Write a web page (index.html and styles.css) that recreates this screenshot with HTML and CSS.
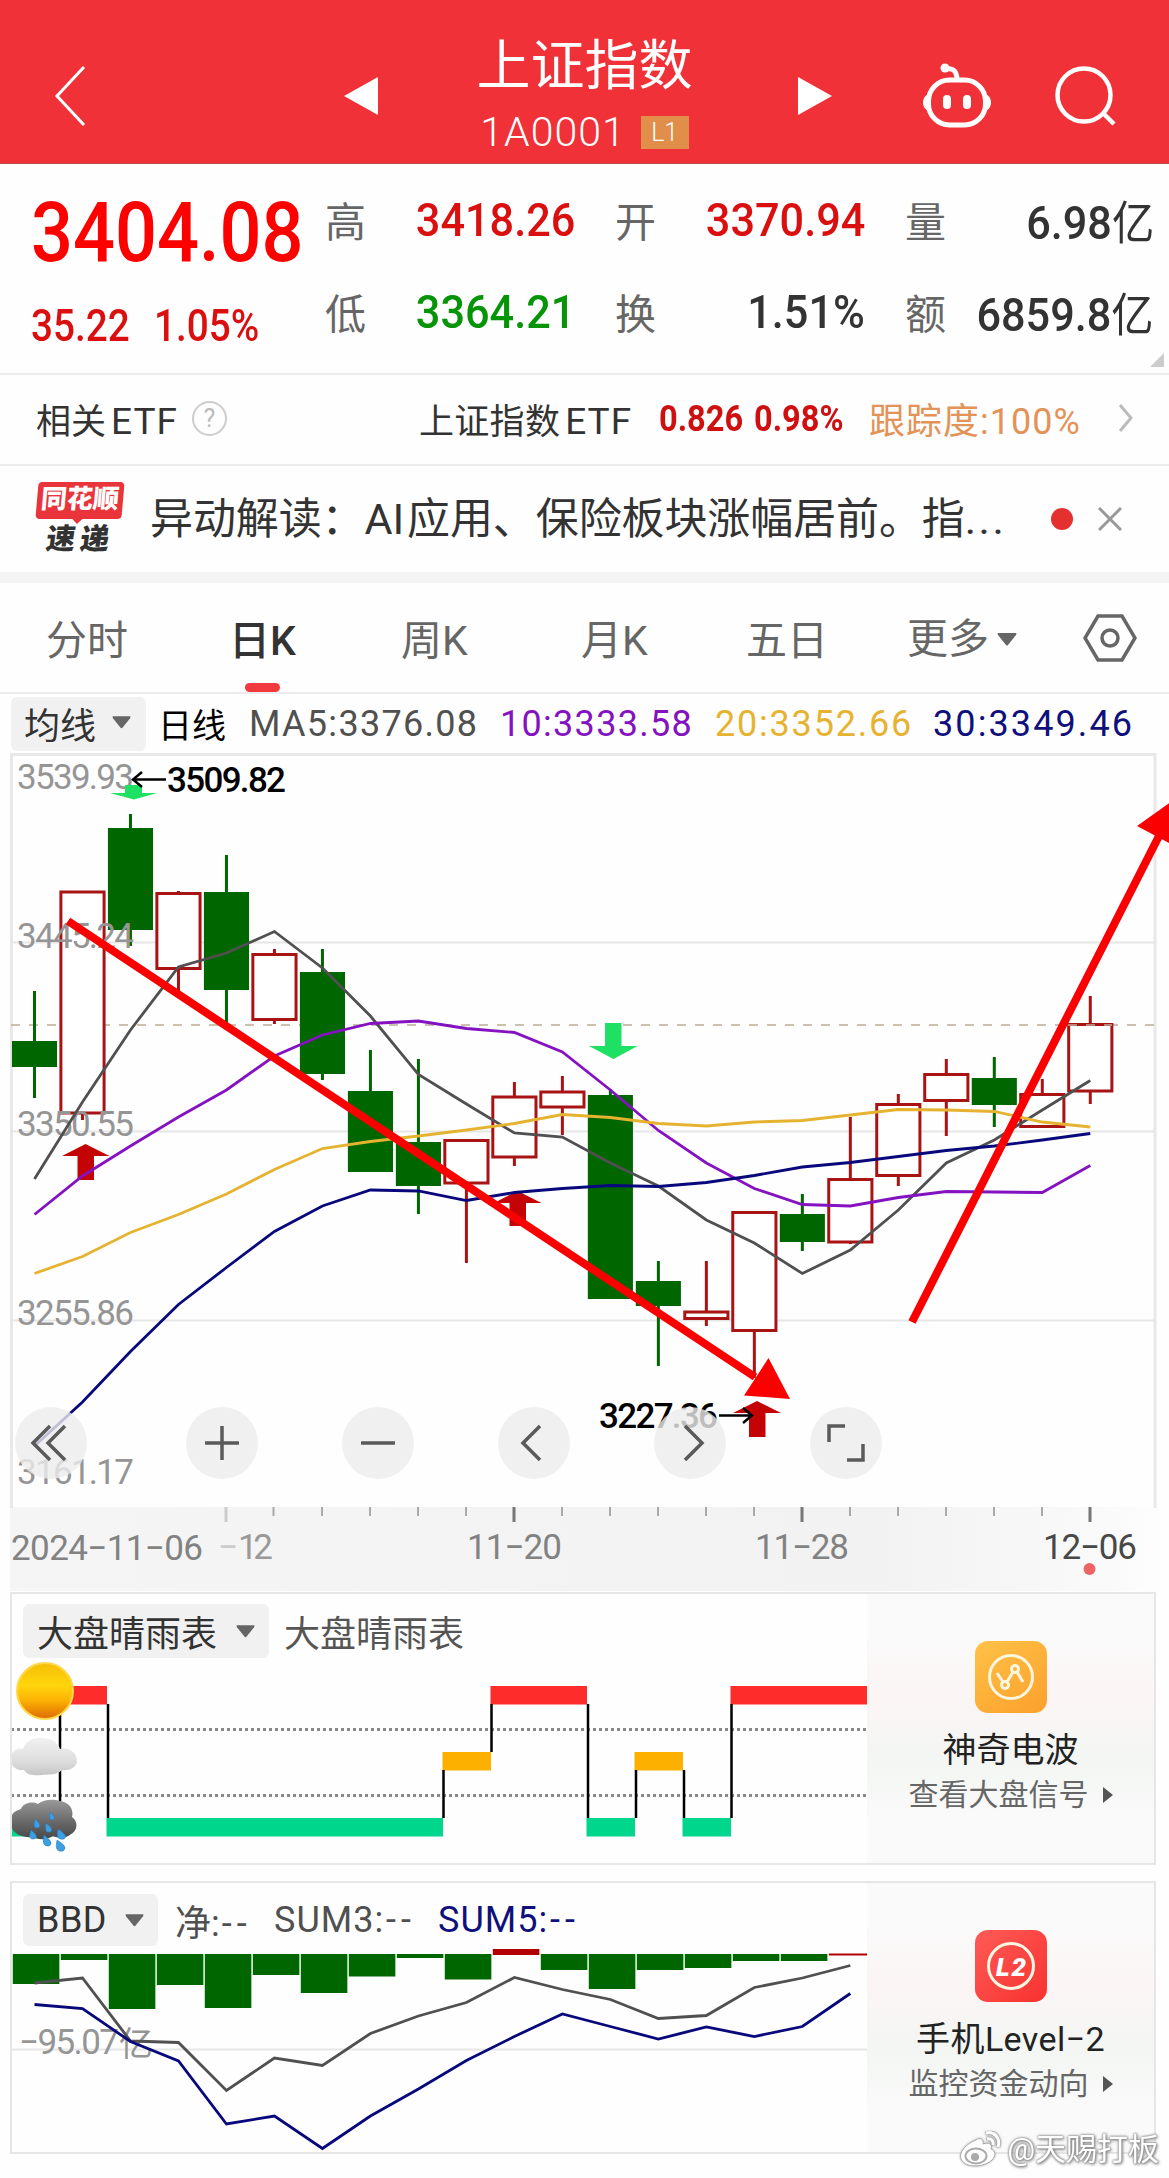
FILE: index.html
```html
<!DOCTYPE html>
<html lang="zh-CN">
<head>
<meta charset="utf-8">
<title>上证指数 1A0001</title>
<link rel="stylesheet" href="styles.css">
</head>
<body>
<div class="app">
  <header class="topbar">
    <svg class="ic-back" width="34" height="62" viewBox="0 0 34 62"><path d="M31 2L4 31L31 60"/></svg>
    <svg class="ic-prev" width="35" height="38" viewBox="0 0 35 38"><path d="M0 19L34 0V38Z"/></svg>
    <div class="title">
      <h1>上证指数</h1>
      <p><span>1A0001</span><em>L1</em></p>
    </div>
    <svg class="ic-next" width="35" height="38" viewBox="0 0 35 38"><path d="M35 19L1 0V38Z"/></svg>
    <svg class="ic-bot" width="70" height="66" viewBox="0 0 70 66">
      <rect x="6.500" y="17" width="57" height="45" rx="21"/>
      <path d="M35 17C35 8 31 5 25 6"/>
      <circle class="solid" cx="23" cy="5" r="4.500"/>
      <path class="solid" d="M7 31C-1 33-1 46 7 48ZM63 31C71 33 71 46 63 48Z"/>
      <rect class="solid" x="21" y="32" width="8" height="14" rx="4"/>
      <rect class="solid" x="41" y="32" width="8" height="14" rx="4"/>
    </svg>
    <svg class="ic-search" width="62" height="62" viewBox="0 0 62 62"><circle cx="29" cy="30" r="26.500"/><path d="M48 48L59 59"/></svg>
  </header>

  <section class="quote">
    <div class="last">
      <b class="price">3404.08</b>
      <div class="chg"><b>35.22</b><b>1.05%</b></div>
    </div>
    <dl class="stats">
      <dt>高</dt><dd class="up">3418.26</dd><dt>开</dt><dd class="up">3370.94</dd><dt>量</dt><dd>6.98<i>亿</i></dd>
      <dt>低</dt><dd class="down">3364.21</dd><dt>换</dt><dd>1.51%</dd><dt>额</dt><dd>6859.8<i>亿</i></dd>
    </dl>
    <span class="corner"></span>
  </section>

  <section class="etf">
    <span class="etf-label">相关<span class="latin">ETF</span></span>
    <span class="help">?</span>
    <span class="etf-name">上证指数<span class="latin">ETF</span></span>
    <b class="etf-price">0.826</b>
    <b class="etf-pct">0.98%</b>
    <span class="track">跟踪度:100%</span>
    <svg width="16" height="30" viewBox="0 0 16 30"><path d="M2 2L13 15L2 28"/></svg>
  </section>

  <section class="news">
    <div class="brand"><strong>同花顺</strong><b>速递</b></div>
    <p>异动解读：<span>AI</span>应用、保险板块涨幅居前。指<span class="more-dots">...</span></p>
    <i class="dot"></i>
    <svg width="24" height="24" viewBox="0 0 24 24"><path d="M1 1L23 23M23 1L1 23"/></svg>
  </section>

  <nav class="tabs">
    <a>分时</a><a class="active">日K</a><a>周K</a><a>月K</a><a>五日</a>
    <a class="more">更多<svg width="20" height="13" viewBox="0 0 20 13"><path d="M1 0H19Q20 0 19 2L11 12Q10 13 9 12L1 2Q0 0 1 0Z"/></svg></a>
    <svg class="gear" width="54" height="48" viewBox="0 0 54 48"><path d="M15 2H39L52 24L39 46H15L2 24Z"/><circle cx="27" cy="24" r="8"/></svg>
  </nav>

  <div class="ma">
    <span class="chip">均线<svg width="19" height="13" viewBox="0 0 20 13"><path d="M1 0H19Q20 0 19 2L11 12Q10 13 9 12L1 2Q0 0 1 0Z"/></svg></span>
    <span class="ma-kind">日线</span>
    <span class="ma5">MA5:3376.08</span>
    <span class="ma10">10:3333.58</span>
    <span class="ma20">20:3352.66</span>
    <span class="ma30">30:3349.46</span>
  </div>

  <div class="kline">
    <svg class="plot" width="1169" height="756" viewBox="0 752 1169 756">
      <path class="frame" d="M11.500 1508V754.500H1155V1508"/>
      <path class="grid" d="M11 942.500H1155M11 1131.500H1155M11 1320.500H1155"/>
      <path class="now" d="M11 1025H1155"/>
      <g transform="translate(34.500 0) scale(47.990 1)">
        <path class="wick dn" d="M0 991V1098M2 814V946M4 855V1023M6 949V1080M7 1050V1100M8 1059V1214M12 1089V1100M13 1261V1366M16 1194V1251M20 1057V1127"/>
        <path class="body dn" d="M-.47 1041h.94v26h-.94zM1.530 828h.94v102h-.94zM3.530 892h.94v98h-.94zM5.530 972h.94v102h-.94zM6.530 1091h.94v81h-.94zM7.530 1142h.94v44h-.94zM11.530 1095h.94v204h-.94zM12.530 1281h.94v25h-.94zM15.530 1214h.94v28h-.94zM19.530 1078h.94v27h-.94z"/>
        <path class="wick up" d="M1 1112V1120M3 891V991M5 949V1024M9 1183V1263M10 1082V1166M11 1076V1135M14 1261V1326M15 1330V1378M17 1117V1244M18 1094V1186M19 1059V1136M21 1079V1094M22 996V1104"/>
        <path class="body up" d="M.55 892h.9v221h-.9zM2.550 893.500h.9v75h-.9zM4.550 954.500h.9v65h-.9zM8.550 1140.500h.9v42.500h-.9zM9.550 1097h.9v60h-.9zM10.550 1092h.9v15h-.9zM13.550 1312h.9v6.500h-.9zM14.550 1212.500h.9v118h-.9zM16.550 1179.500h.9v62.500h-.9zM17.550 1104.500h.9v71h-.9zM18.550 1074.500h.9v26h-.9zM20.550 1094.500h.9v32h-.9zM21.550 1024.500h.9v66.500h-.9z"/>
      </g>
      <path class="now" d="M1068 1025H1112"/>
      <g class="axis">
        <text x="17" y="789" textLength="117">3539.93</text>
        <text x="17" y="947.500" textLength="117">3445.24</text>
        <text x="17" y="1136" textLength="117">3350.55</text>
        <text x="17" y="1324.500" textLength="117">3255.86</text>
        <text x="17" y="1483.500" textLength="117">3161.17</text>
      </g>
      <path class="sell" d="M125 785H142V793H157L134 799.500L110 793H125ZM605 1023H621.500V1046H637.500L613.500 1059L589 1046H605Z"/>
      <path class="buy" d="M85.500 1144L109.500 1156H94V1180H77.500V1156H62ZM517.500 1191L541.500 1203H526V1226H509.500V1203H494ZM757 1401L781 1413H765.500V1437H749V1413H733Z"/>
      <g class="lines" transform="translate(34.500 0) scale(47.990 1)">
        <polyline stroke="#505050" points="0,1179 1,1102 2,1030 3,967 4,953 5,931.500 6,968 7,1016 8,1074.500 9,1104 10,1133 11,1137 12,1163 13,1186 14,1220 15,1243 16,1273.500 17,1250 18,1210 19,1163 20,1140 21,1110 22,1080.500"/>
        <polyline stroke="#8412c0" points="0,1214.500 1,1176 2,1146 3,1117 4,1090 5,1056 6,1035 7,1023.500 8,1021 9,1028.500 10,1032.500 11,1052 12,1090 13,1130.500 14,1163 15,1188.500 16,1204.500 17,1206 18,1197.500 19,1191.500 20,1192 21,1192.500 22,1165.500"/>
        <polyline stroke="#e6b330" points="0,1273.500 1,1256.500 2,1232.500 3,1214.500 4,1194 5,1169.500 6,1148.500 7,1141.500 8,1136 9,1130 10,1123.500 11,1114.500 12,1117.500 13,1123.500 14,1126 15,1122 16,1120.500 17,1115 18,1109.500 19,1110 20,1111.500 21,1122 22,1127"/>
        <polyline stroke="#08087c" points="0,1446 1,1402 2,1351.500 3,1304.500 4,1267.500 5,1231.500 6,1206 7,1190 8,1191 9,1200.500 10,1192.500 11,1188.500 12,1185.500 13,1186.500 14,1182.500 15,1175.500 16,1167 17,1162.500 18,1156.500 19,1150.500 20,1146 21,1140 22,1133.500"/>
      </g>
      <g class="extreme">
        <text x="167" y="792" textLength="119">3509.82</text>
        <text x="599" y="1428" textLength="119">3227.36</text>
        <path d="M166 779.500H133M142 772L133 779.500L142 787M719 1415.500H752M743 1408L752 1415.500L743 1423"/>
      </g>
      <path class="trend" d="M68 921L755 1377M912 1322L1159 836"/>
      <path class="head" d="M768.500 1358L790 1399L744 1395.500ZM1137 826L1182 794L1180 849Z"/>
    </svg>
    <div class="tools">
      <button><svg viewBox="0 0 72 72"><path d="M35 19L18 36L35 53M50 19L33 36L50 53"/></svg></button>
      <button><svg viewBox="0 0 72 72"><path d="M19 36H53M36 19V53"/></svg></button>
      <button><svg viewBox="0 0 72 72"><path d="M19 36H53"/></svg></button>
      <button><svg viewBox="0 0 72 72"><path d="M42 19L25 36L42 53"/></svg></button>
      <button><svg viewBox="0 0 72 72"><path d="M31 19L48 36L31 53"/></svg></button>
      <button><svg viewBox="0 0 72 72"><path d="M19 35V19H35M53 37V53H37"/></svg></button>
    </div>
  </div>

  <div class="dates">
    <svg width="1169" height="84" viewBox="0 1507 1169 84">
      <path class="minor" d="M273.500 1507v9M322 1507v9M370 1507v9M418 1507v9M466 1507v9M562 1507v9M610 1507v9M658 1507v9M706 1507v9M754 1507v9M850 1507v9M898 1507v9M946 1507v9M994 1507v9M1042 1507v9"/>
      <path class="first" d="M226 1507v15"/>
      <path class="major" d="M514 1507v15M802 1507v15M1090 1507v15"/>
      <text class="d" x="11" y="1559.500" textLength="192">2024−11−06</text>
      <text class="fade" x="218" y="1559" textLength="15">−</text>
      <text class="fade2" x="238" y="1559" textLength="35">12</text>
      <text class="d" x="467" y="1559" textLength="95">11−20</text>
      <text class="d" x="755" y="1559" textLength="94">11−28</text>
      <text class="today" x="1043" y="1559" textLength="94">12−06</text>
      <circle cx="1089.500" cy="1569" r="6" fill="#ed6464"/>
    </svg>
  </div>

  <section class="panel">
    <div class="chart">
      <svg class="plot" width="856" height="270" viewBox="12 1594 856 270">
        <path class="dots" d="M11 1729.500H867M11 1795.500H867"/>
        <path fill="#ff2c2c" d="M59 1686h48v18.500h-48zM490.500 1686h96.500v18.500h-96.500zM730.500 1686H868v18.500H730.500z"/>
        <path fill="#fdb000" d="M442.500 1752h48.500v18.500h-48.500zM634.500 1752h48.500v18.500h-48.500z"/>
        <path fill="#00d68c" d="M11 1818h48v18.500h-48zM106.500 1818h336.500v18.500h-336.500zM586.500 1818h48.500v18.500h-48.500zM682.500 1818h48.500v18.500h-48.500z"/>
        <path class="step" d="M60 1704V1818M108 1704V1818M443.500 1770V1818M491.500 1704V1752M588 1704V1818M636 1770V1818M684 1770V1818M731.500 1704V1818"/>
        <defs>
          <linearGradient id="sun" x2="0" y2="1"><stop offset="0" stop-color="#f5be05"/><stop offset=".4" stop-color="#ffd60c"/><stop offset=".65" stop-color="#fdb505"/><stop offset="1" stop-color="#dc6a00"/></linearGradient>
          <linearGradient id="cloud" x2="0" y2="1"><stop offset="0" stop-color="#f1f1f1"/><stop offset=".6" stop-color="#dedede"/><stop offset="1" stop-color="#c6c6c6"/></linearGradient>
          <linearGradient id="storm" x2="0" y2="1"><stop offset="0" stop-color="#999"/><stop offset=".6" stop-color="#666"/><stop offset="1" stop-color="#484848"/></linearGradient>
        </defs>
        <circle cx="45" cy="1691" r="28" fill="url(#sun)" stroke="#ffd84a" stroke-width="2"/>
        <path fill="url(#cloud)" d="M11 1760C10 1751 17 1748 23 1749C26 1741 33 1737 43 1738C52 1738 58 1743 60 1749C70 1747 77 1753 77 1762C76 1768 68 1771 62 1770C56 1776 47 1774 42 1775C34 1776 27 1775 24 1770C17 1771 11 1767 11 1760Z"/>
        <path fill="url(#storm)" d="M11 1825C9 1815 14 1811 21 1809C23 1803 32 1801 38 1804C44 1799 53 1799 60 1801C69 1802 74 1809 72 1817C79 1822 77 1831 71 1834C66 1839 58 1838 53 1836C47 1840 38 1840 32 1837C22 1838 12 1833 11 1825Z"/>
        <path fill="#3b9fe2" stroke="#2476b4" stroke-width=".5" d="M50 1812q-2 9 3 8q4-2-3-8zM35 1819q-3 10 3 9q5-2-3-9zM46 1823q-2 11 4 9q5-2-4-9zM31 1830q-4 10 3 9q6-2-3-9zM44 1835q-3 12 5 11q6-3-5-11zM58 1829q-3 12 6 10q5-3-6-10zM57 1840q-3 13 6 11q6-4-6-11z"/>
      </svg>
      <div class="legend">
        <span class="chip">大盘晴雨表<svg width="19" height="13" viewBox="0 0 20 13"><path d="M1 0H19Q20 0 19 2L11 12Q10 13 9 12L1 2Q0 0 1 0Z"/></svg></span>
        <span class="name">大盘晴雨表</span>
      </div>
    </div>
    <aside class="promo">
      <svg class="badge wave" viewBox="0 0 72 72"><circle cx="36" cy="36" r="21.500"/><path d="M22 32L28 41M32 41L38 31M42 31L48 41"/><circle cx="30" cy="44" r="3.500"/><circle cx="40" cy="28" r="3.500"/></svg>
      <h3>神奇电波</h3>
      <p>查看大盘信号<i></i></p>
    </aside>
  </section>

  <section class="panel bbd">
    <div class="chart">
      <svg class="plot" width="856" height="270" viewBox="12 1883 856 270">
        <path class="grid" d="M11 2049.500H868"/>
        <g transform="translate(12.800 0) scale(48 1)">
          <path fill="#006600" d="M0 1954h.97v30h-.97zM1 1954h.97v6h-.97zM2 1954h.97v55h-.97zM3 1954h.97v31h-.97zM4 1954h.97v54h-.97zM5 1954h.97v21h-.97zM6 1954h.97v39h-.97zM7 1954h.97v22.500h-.97zM8 1954h.97v4h-.97zM9 1954h.97v25.500h-.97zM11 1954h.97v16h-.97zM12 1954h.97v35h-.97zM13 1954h.97v16h-.97zM14 1954h.97v14h-.97zM15 1954h.97v7h-.97zM16 1954h.97v7h-.97z"/>
          <path fill="#b20000" d="M10 1949h.97v6h-.97zM17 1953.500h1v2h-1z"/>
        </g>
        <text class="scale" x="19" y="2054" textLength="100">−95.07</text>
        <text class="scale cn" x="119" y="2056">亿</text>
        <g class="lines" transform="translate(34.500 0) scale(47.990 1)">
          <polyline stroke="#505050" points="0,1983 1,1978 2,2041 3,2042.500 4,2090.500 5,2058 6,2065.500 7,2033.500 8,2016 9,2002.500 10,1977.500 11,1989.500 12,1999.500 13,2018.500 14,2015.500 15,1987.500 16,1978 17,1965.500"/>
          <polyline stroke="#08087c" points="0,2004.500 1,2008.500 2,2041.500 3,2061 4,2124 5,2116 6,2148.500 7,2116 8,2089 9,2060.500 10,2036.500 11,2014 12,2026.500 13,2039 14,2027 15,2036.500 16,2026.500 17,1993.500"/>
        </g>
      </svg>
      <div class="legend">
        <span class="chip">BBD<svg width="19" height="13" viewBox="0 0 20 13"><path d="M1 0H19Q20 0 19 2L11 12Q10 13 9 12L1 2Q0 0 1 0Z"/></svg></span>
        <span class="net">净:<i>--</i></span>
        <span class="sum3">SUM3:<i>--</i></span>
        <span class="sum5">SUM5:<i>--</i></span>
      </div>
    </div>
    <aside class="promo">
      <svg class="badge level" viewBox="0 0 72 72"><circle cx="36" cy="36" r="22.500"/><text x="21" y="46" textLength="30">L2</text></svg>
      <h3>手机Level−2</h3>
      <p>监控资金动向<i></i></p>
    </aside>
    <div class="mark">
      <svg width="44" height="38" viewBox="0 0 44 38">
        <path class="w" d="M17 9C21 6 25 8 24 13C30 11 34 13 32 18C37 20 37 25 33 29C26 36 10 37 4 31C-3 24 6 13 17 9Z"/>
        <ellipse class="e" cx="17" cy="25" rx="10.500" ry="7.500"/>
        <circle class="p" cx="16" cy="26" r="4"/>
        <path class="r" d="M27 2C35 0 42 7 39 16M28 8C32 7 35 10 34 14"/>
      </svg>
      <span>@天赐打板</span>
    </div>
  </section>
</div>
</body>
</html>
```
FILE: styles.css
```css
* { box-sizing: border-box; margin: 0; padding: 0; }
body {
  width: 1169px;
  height: 2178px;
  background: #fefefe;
  color: #333;
  font-family: Roboto, "Noto Sans CJK SC", sans-serif;
  overflow: hidden;
}
svg { display: block; flex: none; }
em, i { font-style: normal; }
.app { display: flex; flex-direction: column; width: 1169px; height: 2178px; position: relative; overflow: hidden; }
.app > * { flex: none; }

/* Top bar */
.topbar { display: flex; align-items: center; height: 164px; padding: 29px 0 0 53px; background: #f03238; color: #fff; border-bottom: 1px solid #b8494c; }
.topbar svg { fill: none; stroke: #fff; }
.ic-back { stroke-width: 3; }
.topbar .ic-prev, .topbar .ic-next { fill: #fff; stroke: none; }
.ic-prev { margin-left: 257px; }
.title { width: 418px; height: 132px; padding: 3px 7px 0 0; text-align: center; }
.title h1 { font-size: 54px; font-weight: 400; line-height: 68px; }
.title p { display: flex; justify-content: center; align-items: center; height: 62px; }
.title span { font-size: 41px; font-weight: 300; letter-spacing: 1px; margin-right: 15px; }
.title em { width: 48px; height: 33px; line-height: 33px; font-size: 25px; font-weight: 300; background: #e18e4a; }
.ic-bot { margin-left: 90px; stroke-width: 5; }
.solid { fill: #fff; stroke: none; }
.ic-search { margin-left: 63px; stroke-width: 4.5; }

/* Quote */
.quote { display: flex; position: relative; height: 211px; border-bottom: 2px solid #ececec; }
.last { width: 325px; padding-left: 31px; }
.last b { display: block; transform-origin: 0 50%; font-weight: 500; }
.price { font-size: 84px; line-height: 100px; margin-top: 19px; color: #fd0000; transform: scaleX(.88); }
.chg { display: flex; height: 60px; margin-top: 13px; color: #da1010; }
.chg b { width: 123px; font-size: 44px; line-height: 60px; transform: scaleX(.88); }
.stats { display: grid; width: 830px; grid-template-columns: 40px 210px 81px 209px 80px 209px; grid-template-rows: 92px 92px; padding-top: 9px; align-items: center; }
.stats dt { font-size: 41px; color: #666; }
.stats dt:nth-of-type(3n+2), .stats dt:nth-of-type(3n) { padding-left: 40px; }
.stats dd { justify-self: end; font-size: 47px; font-weight: 500; white-space: nowrap; transform: scaleX(.92); transform-origin: 100% 50%; }
.stats dd i { font-size: 46px; font-weight: 400; }
.stats .up { color: #da1010; }
.stats .down { color: #089408; }
.corner { position: absolute; right: 5px; bottom: 6px; border: 7px solid transparent; border-right-color: #ccc; border-bottom-color: #ccc; }

/* Related ETF */
.etf { display: flex; align-items: center; height: 91px; padding: 0 0 3px 36px; border-bottom: 2px solid #ececec; font-size: 35px; white-space: nowrap; }
.latin { margin-left: 5px; font-size: 37px; letter-spacing: 1px; }
.etf-label { width: 156px; }
.help { width: 35px; height: 35px; line-height: 31px; border: 2px solid #ccc; border-radius: 50%; text-align: center; font-size: 25px; color: #bbb; }
.etf-name { width: 240px; margin-left: 192px; letter-spacing: .3px; }
.etf b { color: #cf1010; font-size: 37px; font-weight: 700; transform: scaleX(.88); transform-origin: 0 50%; }
.etf-price { width: 95px; }
.etf-pct { width: 115px; }
.track { width: 249px; color: #e39258; font-size: 36px; letter-spacing: 1px; }
.etf svg { fill: none; stroke: #bbb; stroke-width: 3; }

/* News strip */
.news { display: flex; align-items: center; height: 117px; padding: 0 0 0 37px; border-bottom: 11px solid #f4f4f4; }
.brand { width: 113px; height: 74px; text-align: center; }
.brand strong { display: block; position: relative; width: 86px; height: 37px; line-height: 35px; background: #e8343a; border-radius: 4px; color: #fff; font-size: 26px; font-weight: 900; transform: skewX(-5deg); }
.brand strong::after { content: ""; position: absolute; left: 36px; top: 36px; border: 6px solid transparent; border-top-color: #e8343a; border-bottom: 0; }
.brand b { display: block; width: 87px; line-height: 40px; font-size: 29px; font-weight: 900; letter-spacing: 5px; transform: skewX(-8deg); }
.news p { width: 901px; font-size: 43px; line-height: 60px; white-space: nowrap; letter-spacing: -.1px; }
.news p span { margin-right: 3px; }
.news p .more-dots { letter-spacing: 2.5px; }
.dot { width: 22px; height: 22px; border-radius: 50%; background: #e53030; }
.news svg { margin-left: 25px; fill: none; stroke: #999; stroke-width: 3; }

/* Period tabs */
.tabs { display: grid; grid-template-columns: 183px 172px 180px 165px 161px 176px 54px; align-items: center; height: 111px; padding-left: 46px; border-bottom: 2px solid #ececec; font-size: 41px; color: #666; }
.tabs a { position: relative; line-height: 109px; padding-top: 4px; height: 109px; overflow: hidden; }
.tabs .active { color: #333; font-weight: 500; }
.tabs .active::after { content: ""; position: absolute; left: 16px; bottom: 0; width: 35px; height: 9px; border-radius: 5px; background: #f03a40; }
.more { display: flex; align-items: center; gap: 8px; }
.more svg, .chip svg { fill: #666; }
.gear { fill: none; stroke: #666; stroke-width: 3.5; }

/* Moving average legend */
.ma { display: flex; align-items: center; height: 58px; padding: 1px 0 0 11px; font-size: 36px; white-space: nowrap; }
.chip { display: flex; align-items: center; justify-content: space-between; background: #f1f1f1; border-radius: 6px; color: #333; }
.ma .chip { width: 135px; height: 54px; padding: 0 15px 2px 13px; font-size: 36px; }
.ma-kind { width: 91px; margin-left: 12px; color: #000; font-size: 34px; }
.ma5 { width: 251px; color: #505050; letter-spacing: 1.3px; }
.ma10 { width: 215px; color: #8412c0; letter-spacing: 1.3px; }
.ma20 { width: 218px; color: #e6b330; letter-spacing: 1.8px; }
.ma30 { color: #10107c; letter-spacing: 2.1px; }

/* Candlestick chart */
.kline { position: relative; height: 755px; }
.kline .plot { height: 756px; }
.frame { fill: none; stroke: #e8e8e8; stroke-width: 3; }
.grid { stroke: #e6e6e6; stroke-width: 2; }
.now { stroke: #b9ad94; stroke-width: 1.5; stroke-dasharray: 9 9; }
.wick, .body.up { stroke-width: 3; vector-effect: non-scaling-stroke; }
.wick.dn { stroke: #006600; }
.wick.up { stroke: #a81414; }
.body.dn { fill: #006600; }
.body.up { fill: #fff; stroke: #a81414; }
.lines polyline { fill: none; stroke-width: 2.8; vector-effect: non-scaling-stroke; }
text { font-size: 35px; }
.axis text, .scale { fill: #959595; }
.scale.cn { font-size: 34px; }
.sell { fill: #1ee062; }
.buy { fill: #c40404; }
.extreme text { fill: #000; font-weight: 500; }
.extreme path { fill: none; stroke: #000; stroke-width: 2.5; }
.trend { fill: none; stroke: #fb0000; stroke-width: 8; }
.head { fill: #fb0000; }
.tools { position: absolute; left: 15px; top: 655px; display: flex; gap: 84px; }
.tools button { width: 72px; height: 72px; border: 0; border-radius: 50%; background: rgba(236, 236, 236, .8); }
.tools button:first-child { margin-right: 15px; }
.tools path { fill: none; stroke: #5a5a5a; stroke-width: 3.5; }

/* Date axis */
.dates { height: 84px; margin-left: 10px; background: linear-gradient(90deg, #f5f5f5 0, #f2f2f2 75%, #fafafa 95%, #fefefe 100%); }
.dates svg { margin-left: -10px; }
.minor { stroke: #aaa; stroke-width: 2; }
.first { stroke: #ccc; stroke-width: 3; }
.major { stroke: #777; stroke-width: 3; }
.d { fill: #828282; }
.fade { fill: #ccc; }
.fade2 { fill: #999; }
.today { fill: #484848; }

/* Indicator panels */
.panel { display: flex; position: relative; width: 1146px; height: 273px; margin: 1px 0 0 10px; border: 2px solid #e6e6e6; }
.bbd { margin-top: 16px; }
.chart { position: relative; width: 855px; height: 269px; overflow: hidden; }
.legend { position: absolute; left: 11px; top: 10px; display: flex; align-items: center; height: 54px; white-space: nowrap; font-size: 36px; }
.legend .chip { width: 246px; height: 54px; padding: 0 14px; }
.name { margin-left: 15px; color: #555; }
.bbd .chip { width: 135px; height: 52px; letter-spacing: .5px; }
.net { width: 99px; margin-left: 17px; color: #505050; }
.legend i { letter-spacing: 5px; margin-left: 2px; }
.sum3 { width: 164px; color: #505050; letter-spacing: 1px; }
.sum5 { color: #10107c; letter-spacing: 1px; }
.dots { stroke: #888; stroke-width: 3; stroke-dasharray: 3 3; }
.step { stroke: #000; stroke-width: 2.5; }
.promo { display: flex; flex-direction: column; align-items: center; width: 287px; padding-top: 47px; background: linear-gradient(180deg, #fafafa 15%, #fbf5f4 38%, #f3f6f3 62%, #fafafa 85%); }
.badge { width: 72px; height: 72px; border-radius: 13px; fill: none; stroke: #fff6e0; stroke-width: 3; }
.wave { background: linear-gradient(145deg, #ffc247, #fba02c); }
.level { background: linear-gradient(135deg, #ff5b57, #f7322f); }
.level text { fill: #fff; stroke: none; font-size: 26px; font-weight: 900; font-style: italic; }
.promo h3 { margin-top: 15px; font-size: 34px; line-height: 44px; font-weight: 400; color: #222; white-space: nowrap; }
.bbd h3 { letter-spacing: .4px; }
.promo p { display: flex; align-items: center; margin-top: 3px; font-size: 30px; line-height: 40px; color: #666; white-space: nowrap; }
.promo p i { margin-left: 14px; border: 8px solid transparent; border-left: 10px solid #555; border-right: 0; }

/* Author watermark */
.mark { position: absolute; right: -5px; bottom: -20px; display: flex; align-items: center; gap: 4px; color: #fff; font-size: 31px; line-height: 44px; text-shadow: 0 0 2px #888, 1px 1px 3px #888; white-space: nowrap; filter: drop-shadow(0 0 1px #aaa); }
.w { fill: #fff; stroke: #aaa; }
.e { fill: #fff; stroke: #aaa; stroke-width: 2; }
.p { fill: #aaa; }
.r { fill: none; stroke: #fff; stroke-width: 3; filter: drop-shadow(0 0 1px #777); }
```
